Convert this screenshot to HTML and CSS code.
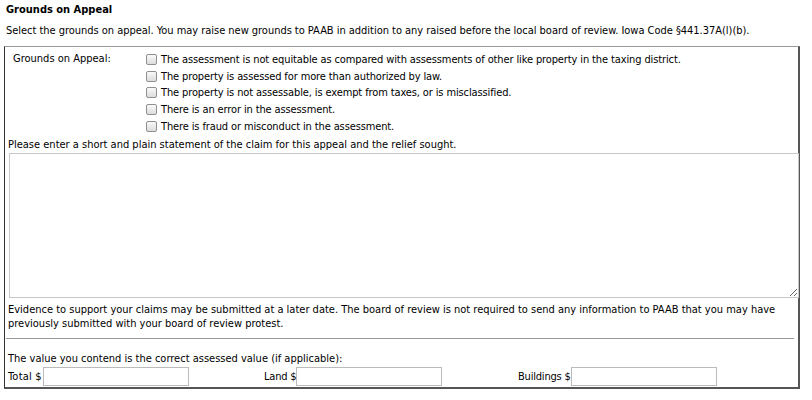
FILE: index.html
```html
<!DOCTYPE html>
<html>
<head>
<meta charset="utf-8">
<link rel="stylesheet" href="styles.css">
</head>
<body>
<div class="page">
  <h3 class="title">Grounds on Appeal</h3>
  <p class="intro">Select the grounds on appeal. You may raise new grounds to PAAB in addition to any raised before the local board of review. Iowa Code §441.37A(l)(b).</p>
  <div class="box">
    <div class="grounds">
      <div class="glabel">Grounds on Appeal:</div>
      <div class="options">
        <label class="opt"><input type="checkbox" class="cb"><span>The assessment is not equitable as compared with assessments of other like property in the taxing district.</span></label>
        <label class="opt"><input type="checkbox" class="cb"><span>The property is assessed for more than authorized by law.</span></label>
        <label class="opt"><input type="checkbox" class="cb"><span>The property is not assessable, is exempt from taxes, or is misclassified.</span></label>
        <label class="opt"><input type="checkbox" class="cb"><span>There is an error in the assessment.</span></label>
        <label class="opt"><input type="checkbox" class="cb"><span>There is fraud or misconduct in the assessment.</span></label>
      </div>
    </div>
    <div class="claim">Please enter a short and plain statement of the claim for this appeal and the relief sought.</div>
    <textarea class="ta"></textarea>
    <div class="evidence">Evidence to support your claims may be submitted at a later date. The board of review is not required to send any information to PAAB that you may have previously submitted with your board of review protest.</div>
    <hr class="rule">
    <div class="contend">The value you contend is the correct assessed value (if applicable):</div>
    <div class="values">
      <div class="field f-total"><span>Total $</span><input type="text" class="inp"></div>
      <div class="field f-land"><span>Land $</span><input type="text" class="inp"></div>
      <div class="field f-build"><span>Buildings $</span><input type="text" class="inp"></div>
    </div>
  </div>
</div>
</body>
</html>
```
FILE: styles.css
```css
* { box-sizing: border-box; }
html, body { margin: 0; padding: 0; background: #fff; }
body {
  font-family: "DejaVu Sans Condensed", "DejaVu Sans", sans-serif;
  font-size: 11px;
  color: #000;
}
.page { padding: 3px 4px 0 4px; width: 804px; }
.title {
  margin: 0 0 0 2px;
  font-size: 11px;
  font-weight: bold;
  line-height: 14px;
}
.intro {
  margin: 7px 0 0 2px;
  line-height: 14px;
  letter-spacing: -0.03px;
}
.box {
  margin-top: 8px;
  border-top: 1px solid #9a9a9a;
  border-left: 1px solid #333;
  border-right: 2px solid #555;
  border-bottom: 2px solid #555;
  padding: 4px 4px 1px 3px;
}
.grounds { display: flex; }
.glabel { width: 138px; padding-left: 5px; line-height: 16.7px; }
.options { display: flex; flex-direction: column; letter-spacing: -0.12px; }
.opt { display: flex; align-items: center; height: 16.7px; }
.cb {
  appearance: none;
  -webkit-appearance: none;
  width: 11px; height: 11px;
  margin: 0 4px 0 0;
  border: 1px solid #8f8f8f;
  border-radius: 2px;
  background: linear-gradient(#fafafa, #dcdcdc);
}
.claim { margin-top: 4px; line-height: 14px; }
.ta {
  display: block;
  width: 790px;
  height: 145px;
  margin: 1px 0 0 1px;
  border: 1px solid #c8c8c8;
  resize: both;
}
.evidence { margin-top: 5px; line-height: 14px; }
.rule {
  margin: 7px 0 0 -2px;
  border: 0;
  border-top: 1px solid #999;
  height: 0;
}
.contend { margin-top: 13px; line-height: 14px; }
.values { display: flex; margin-top: 0; height: 20px; align-items: center; }
.field { display: flex; align-items: center; }
.field span { letter-spacing: -0.2px; }
.inp {
  width: 146px;
  height: 19px;
  border: 1px solid #bbb;
  margin: 0;
  padding: 1px 2px;
  font: inherit;
}
.f-total { width: 256px; }
.f-total span { letter-spacing: 0.2px; }
.f-total .inp { margin-left: 1px; }
.f-land { width: 254px; }
```
